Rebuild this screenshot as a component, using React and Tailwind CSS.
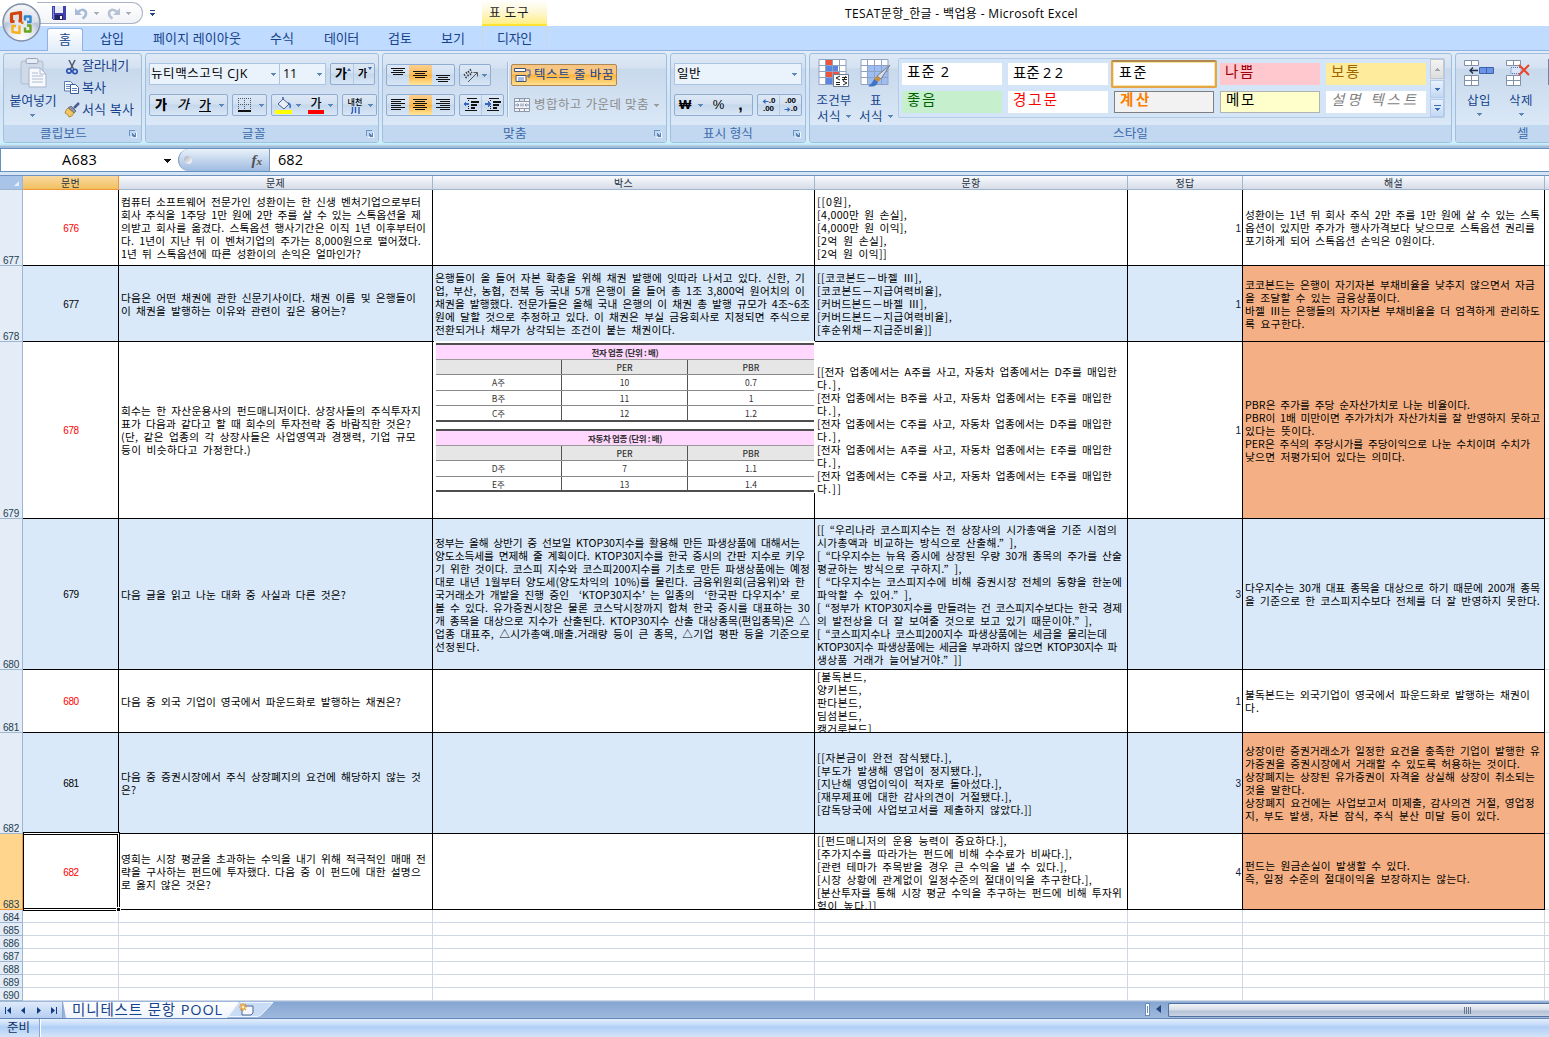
import React, { useLayoutEffect, useRef } from "react";

/* Text whose letter spacing is adjusted so that it fills a given width. */
function Fit({ w, children, className = "" }) {
  const ref = useRef(null);
  useLayoutEffect(() => {
    const el = ref.current;
    el.style.letterSpacing = "0px";
    const natural = el.getBoundingClientRect().width;
    const count = Array.from(el.textContent).length || 1;
    el.style.letterSpacing = (w - natural) / count + "px";
  }, [w, children]);
  return (
    <span ref={ref} className={"inline-block shrink-0 whitespace-pre " + className}>
      {children}
    </span>
  );
}

/* Full-width characters take two cells of 5px, the others one. */
function lineWidth(s) {
  let n = 0;
  for (const c of s) {
    const k = c.codePointAt(0);
    n += k > 0x2020 ? 10 : 5;
  }
  return n;
}

function Lines({ text }) {
  return (
    <div className="flex flex-col items-start">
      {text.split("\n").map((l, i) => (
        <div key={i} className="h-[13px] leading-[13px]">
          <Fit w={lineWidth(l)} className="[word-spacing:2.4px]">{l}</Fit>
        </div>
      ))}
    </div>
  );
}

const rows = [
  {
    n: 677, h: "h-[76px]", id: "676", red: true,
    b: "컴퓨터 소프트웨어 전문가인 성환이는 한 신생 벤처기업으로부터\n회사 주식을 1주당 1만 원에 2만 주를 살 수 있는 스톡옵션을 제\n의받고 회사를 옮겼다. 스톡옵션 행사기간은 이직 1년 이후부터이\n다. 1년이 지난 뒤 이 벤처기업의 주가는 8,000원으로 떨어졌다.\n1년 뒤 스톡옵션에 따른 성환이의 손익은 얼마인가?",
    c: "",
    d: "[[0원],\n[4,000만 원 손실],\n[4,000만 원 이익],\n[2억 원 손실],\n[2억 원 이익]]",
    e: "1",
    f: "성환이는 1년 뒤 회사 주식 2만 주를 1만 원에 살 수 있는 스톡\n옵션이 있지만 주가가 행사가격보다 낮으므로 스톡옵션 권리를\n포기하게 되어 스톡옵션 손익은 0원이다.",
  },
  {
    n: 678, h: "h-[76px]", id: "677", blue: true, orange: true,
    b: "다음은 어떤 채권에 관한 신문기사이다. 채권 이름 및 은행들이\n이 채권을 발행하는 이유와 관련이 깊은 용어는?",
    c: "은행들이 올 들어 자본 확충을 위해 채권 발행에 잇따라 나서고 있다. 신한, 기\n업, 부산, 농협, 전북 등 국내 5개 은행이 올 들어 총 1조 3,800억 원어치의 이\n채권을 발행했다. 전문가들은 올해 국내 은행의 이 채권 총 발행 규모가 4조~6조\n원에 달할 것으로 추정하고 있다. 이 채권은 부실 금융회사로 지정되면 주식으로\n전환되거나 채무가 상각되는 조건이 붙는 채권이다.",
    d: "[[코코본드－바젤 Ⅲ],\n[코코본드－지급여력비율],\n[커버드본드－바젤 Ⅲ],\n[커버드본드－지급여력비율],\n[후순위채－지급준비율]]",
    e: "1",
    f: "코코본드는 은행이 자기자본 부채비율을 낮추지 않으면서 자금\n을 조달할 수 있는 금융상품이다.\n바젤 Ⅲ는 은행들의 자기자본 부채비율을 더 엄격하게 관리하도\n록 요구한다.",
  },
  {
    n: 679, h: "h-[177px]", id: "678", red: true, orange: true, image: true,
    b: "희수는 한 자산운용사의 펀드매니저이다. 상장사들의 주식투자지\n표가 다음과 같다고 할 때 희수의 투자전략 중 바람직한 것은?\n(단, 같은 업종의 각 상장사들은 사업영역과 경쟁력, 기업 규모\n등이 비슷하다고 가정한다.)",
    c: "",
    d: "[[전자 업종에서는 A주를 사고, 자동차 업종에서는 D주를 매입한\n다.],\n[전자 업종에서는 B주를 사고, 자동차 업종에서는 E주를 매입한\n다.],\n[전자 업종에서는 C주를 사고, 자동차 업종에서는 D주를 매입한\n다.],\n[전자 업종에서는 A주를 사고, 자동차 업종에서는 E주를 매입한\n다.],\n[전자 업종에서는 C주를 사고, 자동차 업종에서는 E주를 매입한\n다.]]",
    e: "1",
    f: "PBR은 주가를 주당 순자산가치로 나눈 비율이다.\nPBR이 1배 미만이면 주가가치가 자산가치를 잘 반영하지 못하고\n있다는 뜻이다.\nPER은 주식의 주당시가를 주당이익으로 나눈 수치이며 수치가\n낮으면 저평가되어 있다는 의미다.",
  },
  {
    n: 680, h: "h-[151px]", id: "679", blue: true,
    b: "다음 글을 읽고 나눈 대화 중 사실과 다른 것은?",
    c: "정부는 올해 상반기 중 선보일 KTOP30지수를 활용해 만든 파생상품에 대해서는\n양도소득세를 면제해 줄 계획이다. KTOP30지수를 한국 증시의 간판 지수로 키우\n기 위한 것이다. 코스피 지수와 코스피200지수를 기초로 만든 파생상품에는 예정\n대로 내년 1월부터 양도세(양도차익의 10%)를 물린다. 금융위원회(금융위)와 한\n국거래소가 개발을 진행 중인  ‘KTOP30지수’ 는 일종의  ‘한국판 다우지수’ 로\n볼 수 있다. 유가증권시장은 물론 코스닥시장까지 합쳐 한국 증시를 대표하는 30\n개 종목을 대상으로 지수가 산출된다. KTOP30지수 산출 대상종목(편입종목)은 △\n업종 대표주, △시가총액.매출.거래량 등이 큰 종목, △기업 평판 등을 기준으로\n선정된다.",
    d: "[[ “우리나라 코스피지수는 전 상장사의 시가총액을 기준 시점의\n시가총액과 비교하는 방식으로 산출해.” ],\n[ “다우지수는 뉴욕 증시에 상장된 우량 30개 종목의 주가를 산술\n평균하는 방식으로 구하지.” ],\n[ “다우지수는 코스피지수에 비해 증권시장 전체의 동향을 한눈에\n파악할 수 있어.” ],\n[ “정부가 KTOP30지수를 만들려는 건 코스피지수보다는 한국 경제\n의 발전상을 더 잘 보여줄 것으로 보고 있기 때문이야.” ],\n[ “코스피지수나 코스피200지수 파생상품에는 세금을 물리는데\nKTOP30지수 파생상품에는 세금을 부과하지 않으면 KTOP30지수 파\n생상품 거래가 늘어날거야.” ]]",
    e: "3",
    f: "다우지수는 30개 대표 종목을 대상으로 하기 때문에 200개 종목\n을 기준으로 한 코스피지수보다 전체를 더 잘 반영하지 못한다.",
  },
  {
    n: 681, h: "h-[63px]", id: "680", red: true, top: true,
    b: "다음 중 외국 기업이 영국에서 파운드화로 발행하는 채권은?",
    c: "",
    d: "[불독본드,\n양키본드,\n판다본드,\n딤섬본드,\n캥거루본드]",
    e: "1",
    f: "불독본드는 외국기업이 영국에서 파운드화로 발행하는 채권이\n다.",
  },
  {
    n: 682, h: "h-[101px]", id: "681", blue: true, orange: true,
    b: "다음 중 증권시장에서 주식 상장폐지의 요건에 해당하지 않는 것\n은?",
    c: "",
    d: "[[자본금이 완전 잠식됐다.],\n[부도가 발생해 영업이 정지됐다.],\n[지난해 영업이익이 적자로 돌아섰다.],\n[재무제표에 대한 감사의견이 거절됐다.],\n[감독당국에 사업보고서를 제출하지 않았다.]]",
    e: "3",
    f: "상장이란 증권거래소가 일정한 요건을 충족한 기업이 발행한 유\n가증권을 증권시장에서 거래할 수 있도록 허용하는 것이다.\n상장폐지는 상장된 유가증권이 자격을 상실해 상장이 취소되는\n것을 말한다.\n상장폐지 요건에는 사업보고서 미제출, 감사의견 거절, 영업정\n지, 부도 발생, 자본 잠식, 주식 분산 미달 등이 있다.",
  },
  {
    n: 683, h: "h-[76px]", id: "682", red: true, orange: true, selected: true, top: true,
    b: "영희는 시장 평균을 초과하는 수익을 내기 위해 적극적인 매매 전\n략을 구사하는 펀드에 투자했다. 다음 중 이 펀드에 대한 설명으\n로 옳지 않은 것은?",
    c: "",
    d: "[[펀드매니저의 운용 능력이 중요하다.],\n[주가지수를 따라가는 펀드에 비해 수수료가 비싸다.],\n[관련 테마가 주목받을 경우 큰 수익을 낼 수 있다.],\n[시장 상황에 관계없이 일정수준의 절대이익을 추구한다.],\n[분산투자를 통해 시장 평균 수익을 추구하는 펀드에 비해 투자위\n험이 높다.]]",
    e: "4",
    f: "펀드는 원금손실이 발생할 수 있다.\n즉, 일정 수준의 절대이익을 보장하지는 않는다.",
  },
];

const COLS = "grid grid-cols-[23px_96px_314px_382px_313px_115px_302px_4px]";

function Down({ className = "", color = "#5b86b8" }) {
  return (
    <svg width="5" height="3" viewBox="0 0 5 3" className={"shrink-0 " + className} shapeRendering="crispEdges">
      <path d="M0 0h5v1H4v1H3v1H2V2H1V1H0z" fill={color} />
    </svg>
  );
}

/* ---------- title bar and tabs ---------- */

function OfficeButton() {
  return (
    <svg width="42" height="42" viewBox="0 0 42 42" className="absolute left-0 top-[2px] z-20">
      <defs>
        <radialGradient id="orb" cx="50%" cy="90%" r="90%">
          <stop offset="0" stopColor="#ffffff" />
          <stop offset=".4" stopColor="#dfe5ee" />
          <stop offset=".6" stopColor="#b9c4d6" />
          <stop offset="1" stopColor="#f6f8fb" />
        </radialGradient>
      </defs>
      <circle cx="21.500" cy="20.500" r="18.500" fill="url(#orb)" stroke="#7f8da6" strokeWidth="1.400" />
      <path d="M5 20a16.500 16 0 0 1 33 0q-16 4-33 0z" fill="#fff" opacity=".45" />
      <g fill="none" strokeLinejoin="round">
        <path d="M14.500 19.500h-3v-7.500l9-1.500v8.500h-2" stroke="#d2440e" strokeWidth="3.200" />
        <path d="M25 18.500v-4h5.500v5.500h-3.500" stroke="#2e86d0" strokeWidth="2.400" />
        <path d="M19.500 23.500v7.500l-7-1v-6h3.500" stroke="#f5b21c" strokeWidth="2.500" />
        <path d="M27 23.500h3.500v6h-5.500v-4" stroke="#6aa51f" strokeWidth="2.400" />
      </g>
      <path d="M21 19.500h2.500v2.500h-2.500z" fill="#e8741a" />
    </svg>
  );
}

function QuickAccess() {
  return (
    <div className="ml-[37px] mt-[2px] flex h-[22px] w-[106px] items-center rounded-r-full border border-l-0 border-[#a9b3c4] bg-gradient-to-b from-white to-[#f1f3f8]">
      <svg width="14" height="14" viewBox="0 0 14 14" className="ml-[15px]" shapeRendering="crispEdges">
        <path d="M0 0h14v14H1L0 13z" fill="#3f3fae" />
        <path d="M3 0h8v7H3z" fill="#e9ecf8" />
        <path d="M3 9h8v5H3z" fill="#23235f" />
        <path d="M8 10h2v3H8z" fill="#fff" />
        <path d="M1 1h1v12H1z" fill="#8585dd" />
      </svg>
      <svg width="13" height="13" viewBox="0 0 13 13" className="ml-[9px]">
        <path d="M3 5c4-4 8-2 8 1.500 0 2.500-2 4-3.500 5" fill="none" stroke="#a7bad6" strokeWidth="2.600" />
        <path d="M0 1v7h7z" fill="#a7bad6" />
      </svg>
      <Down className="ml-[6px]" color="#a9adb5" />
      <svg width="13" height="13" viewBox="0 0 13 13" className="ml-[8px]">
        <path d="M10 5c-4-4-8-2-8 1.500 0 2.500 2 4 3.500 5" fill="none" stroke="#b7c3d4" strokeWidth="2.600" />
        <path d="M13 1v7H6z" fill="#b7c3d4" />
      </svg>
      <Down className="ml-[6px]" color="#a9adb5" />
    </div>
  );
}

function TitleBar() {
  return (
    <div className="flex h-[26px] items-start bg-white">
      <QuickAccess />
      <svg width="6" height="6" viewBox="0 0 6 6" className="ml-[7px] mt-[10px]" shapeRendering="crispEdges">
        <path d="M0 0h5v1H0zM0 3h5v1H4v1H3v1H2V5H1V4H0z" fill="#26457f" />
      </svg>
      <div className="ml-[326px] flex h-[26px] w-[65px] justify-start border-b-2 border-[#ffe32e] bg-gradient-to-b from-white via-[#fdf7d3] to-[#ffef80] pl-[7px] text-[12.500px] leading-[25px] text-[#1e1e1e]">
        <Fit w={40}>표 도구</Fit>
      </div>
      <div className="ml-[298px] text-[12px] leading-[27px] text-black">
        <Fit w={233}>TESAT문항_한글 - 백업용 - Microsoft Excel</Fit>
      </div>
    </div>
  );
}

function Tabs() {
  const tabs = [
    ["삽입", 24, "w-[53px]"],
    ["페이지 레이아웃", 88, "w-[117px]"],
    ["수식", 24, "w-[54px]"],
    ["데이터", 35, "w-[64px]"],
    ["검토", 24, "w-[53px]"],
    ["보기", 24, "w-[41px]"],
  ];
  return (
    <div className="flex h-[25px] border-b border-[#8db2e3] bg-[#bfdbff] text-[13px] leading-[24px] text-[#15428b]">
      <div className="ml-[47px] mt-[2px] h-[23px] w-[36px] rounded-t-[3px] border border-b-0 border-[#8db2e3] bg-gradient-to-b from-white to-[#e1ecf9] pl-[11px] leading-[20px]">
        <Fit w={12}>홈</Fit>
      </div>
      <div className="w-[17px]" />
      {tabs.map(([t, w, c]) => (
        <div key={t} className={c}>
          <Fit w={w}>{t}</Fit>
        </div>
      ))}
      <div className="h-[20px] w-[65px] border-x border-[#cdd6d8] pl-[14px]">
        <Fit w={35}>디자인</Fit>
      </div>
    </div>
  );
}

/* ---------- ribbon ---------- */

function Launcher() {
  return (
    <svg width="8" height="8" viewBox="0 0 8 8" className="mr-[4px]" shapeRendering="crispEdges">
      <path d="M0 0h6v1H1v5H0z" fill="#6f94c2" />
      <path d="M3 3h1v1h1v1h1V3h1v5H3V7h1V6H3z" fill="#5d83b4" />
      <path d="M7 2h1v6H2V7h5z" fill="#fff" opacity=".8" />
    </svg>
  );
}

function Group({ w, label, lw, pad, launcher, children }) {
  return (
    <div className={"flex h-[90px] shrink-0 flex-col overflow-hidden rounded-[3px] border border-[#9ebfdd] bg-[linear-gradient(#dfe9f6_0,#d5e1f1_14px,#c8d9ec_15px,#dae8f7_71px)] " + w}>
      <div className="flex h-[71px] shrink-0">{children}</div>
      <div className="flex h-[17px] items-center justify-between bg-[#c1d8f0] text-[12.500px] leading-[16px] text-[#3e6aaa]">
        <div className={pad}>
          <Fit w={lw}>{label}</Fit>
        </div>
        {launcher && <Launcher />}
      </div>
    </div>
  );
}

function Box({ className, children }) {
  return (
    <div className={"flex h-[22px] shrink-0 items-center overflow-hidden rounded-[2px] border border-[#8fadd3] bg-[linear-gradient(#dde8f5_0,#d2e0f1_9px,#c5d7ec_10px,#d8e6f6_20px)] " + className}>
      {children}
    </div>
  );
}

function Align({ kind, active }) {
  const y0 = kind === "top" ? 3 : kind === "mid" ? 6 : kind === "bot" ? 10 : 4;
  const long = kind.length > 1;
  const widths = long ? [14, 10, 14, 10] : [14, 10, 14, 10, 14, 10];
  return (
    <div className={"flex h-[20px] w-[23px] items-center justify-center " + (active ? "bg-[linear-gradient(#fbcf8f,#fcbf5a_9px,#fdb040_10px,#ffe69a)]" : "")}>
      <svg width="14" height="20" viewBox="0 0 14 20" shapeRendering="crispEdges">
        {widths.map((w, i) => {
          const x = kind === "l" ? 0 : kind === "r" ? 14 - w : (14 - w) / 2;
          return <rect key={i} x={x} y={y0 + i * 2} width={w} height="1" fill="#111" />;
        })}
      </svg>
    </div>
  );
}

function Indent({ out }) {
  return (
    <svg width="16" height="14" viewBox="0 0 16 14" shapeRendering="crispEdges" className="mx-[2.500px]">
      <path d="M4 0h10v1H4zM8 3h8v2H8zM8 6h6v2H8zM8 9h4v2H8zM2 12h12v1H2zM5 2h1v1H5zM5 8h1v1H5zM5 10h1v1H5z" fill="#111" />
      {out ? <path d="M0 6l3-3v2h3v2H3v2z" fill="#3566c4" /> : <path d="M6 6L3 3v2H0v2h3v2z" fill="#3566c4" />}
    </svg>
  );
}

function ClipboardGroup() {
  return (
    <Group w="w-[139px]" label="클립보드" lw={47} pad="pl-[36px]" launcher>
      <div className="flex w-[56px] flex-col items-center text-[13px] leading-[18px] text-[#15428b]">
        <svg width="28" height="32" viewBox="0 0 28 32" className="ml-[4px] mt-[3px]">
          <rect x="1" y="4" width="22" height="23" rx="2" fill="#cfd9e8" stroke="#aebdd3" />
          <rect x="6" y="1.500" width="12" height="5" rx="1.500" fill="#e8edf4" stroke="#94a3bb" />
          <path d="M9 11h11l6 6v13H9z" fill="#f7f9fc" stroke="#a5b4cc" />
          <path d="M20 11v6h6M12 16h6M12 19h11M12 22h11M12 25h11" fill="none" stroke="#aebcd3" />
        </svg>
        <Fit w={47} className="mt-[2px] ml-[2px]">붙여넣기</Fit>
        <Down className="mt-[5px]" />
      </div>
      <div className="flex flex-col pl-[4px] text-[13px] leading-[22px] text-[#15428b]">
        <div className="flex h-[22px] items-center">
          <svg width="16" height="16" viewBox="0 0 16 16" className="mr-[2px] mt-[3px]">
            <path d="M5 1l4.500 9M11 1L6.500 10" stroke="#4e5a70" strokeWidth="1.500" fill="none" />
            <circle cx="5" cy="12" r="2.200" fill="none" stroke="#2d55b0" strokeWidth="1.700" />
            <circle cx="11" cy="12.500" r="2.200" fill="none" stroke="#2d55b0" strokeWidth="1.700" />
          </svg>
          <Fit w={47}>잘라내기</Fit>
        </div>
        <div className="flex h-[22px] items-center">
          <svg width="16" height="16" viewBox="0 0 16 16" className="mr-[2px] mt-[2px]">
            <path d="M.5 1.500h6l2.500 2.500v7H.5z" fill="#fff" stroke="#5878b0" />
            <path d="M2 4.500h4M2 6.500h4M2 8.500h4" stroke="#6d8dc5" />
            <path d="M6.500 4.500h5l3 3v6h-8z" fill="#fff" stroke="#3a5c9e" />
            <path d="M8 8.500h5M8 10.500h5" stroke="#5c7fc0" />
          </svg>
          <Fit w={24}>복사</Fit>
        </div>
        <div className="flex h-[22px] items-center">
          <svg width="16" height="16" viewBox="0 0 16 16" className="mr-[2px] mt-[2px]">
            <path d="M15 1l-5 5" stroke="#4a5d8e" strokeWidth="2.500" />
            <path d="M7 4l5 5-2 2-6-5z" fill="#8a93a8" stroke="#4a5470" strokeWidth=".7" />
            <path d="M4 6l6 5q-2 4-5 4-1-3-4-4 1-4 3-5z" fill="#efc565" stroke="#a67a25" strokeWidth=".8" />
          </svg>
          <Fit w={52}>서식 복사</Fit>
        </div>
      </div>
    </Group>
  );
}

function Ga({ className, size = "w-[22px]" }) {
  return <div className={"mb-px text-center leading-[19px] text-black " + size + " " + className}>가</div>;
}

function FontGroup() {
  return (
    <Group w="w-[234px]" label="글꼴" lw={24} pad="pl-[96px]" launcher>
      <div className="flex flex-col pl-[3px] pt-[9px]">
        <div className="flex h-[22px]">
          <div className="flex h-[22px] w-[131px] items-center justify-between border border-[#abc4e3] bg-[#eaf2fb] pl-px pr-[2px] text-[12.500px] leading-[20px] text-black">
            <Fit w={97}>뉴티맥스고딕 CJK</Fit>
            <Down className="mr-px" />
          </div>
          <div className="flex h-[22px] w-[46px] items-center justify-between border border-l-0 border-[#abc4e3] bg-[#eaf2fb] pl-[3px] pr-[3px] text-[12.500px] leading-[20px] text-black">
            <Fit w={14}>11</Fit>
            <Down />
          </div>
          <Box className="ml-[4px] w-[45px] text-[13px] font-bold">
            <Ga className="text-[13px]" size="w-[20px]" />
            <div className="mb-[10px] -ml-[4px] h-0 w-0 border-x-[2px] border-b-[3px] border-x-transparent border-b-[#3c5f9e]" />
            <div className="ml-[2px] h-[20px] w-px bg-[#b4cbe6]" />
            <Ga className="text-[10px]" size="w-[17px]" />
            <div className="mb-[12px] -ml-[3px] h-0 w-0 border-x-[2px] border-t-[3px] border-x-transparent border-t-[#3c5f9e]" />
          </Box>
        </div>
        <div className="mt-[9px] flex h-[22px] gap-[4px]">
          <Box className="w-[79px] text-[13px]">
            <Ga className="font-black" />
            <Ga className="font-medium italic" />
            <Ga className="font-medium underline underline-offset-2" />
            <Down className="ml-[3px]" />
          </Box>
          <Box className="w-[35px]">
            <svg width="14" height="14" viewBox="0 0 14 14" className="ml-[5px]" shapeRendering="crispEdges">
              <path d="M.5 0v12M6.500 0v12M12.500 0v12M0 .5h13M0 6.500h13" stroke="#4b5666" strokeDasharray="1 1" fill="none" />
              <path d="M0 12h13v2H0z" fill="#111" />
            </svg>
            <Down className="ml-[7px]" />
          </Box>
          <Box className="w-[67px]">
            <svg width="17" height="17" viewBox="0 0 17 17" className="ml-[3px]">
              <path d="M3 7l5-5 6 5-5 5z" fill="#e8eef8" stroke="#4a6291" />
              <path d="M8 2V0M13 6q3 1 2 5" fill="none" stroke="#3465bd" strokeWidth="1.500" />
              <path d="M0 13h17v4H0z" fill="#ffff00" />
            </svg>
            <Down className="ml-[4px]" />
            <div className="ml-[7px] flex w-[16px] flex-col items-center text-[12px] font-medium leading-[13px] text-black">
              가<div className="h-[4px] w-[16px] bg-[#ff0000]" />
            </div>
            <Down className="ml-[4px]" />
          </Box>
          <Box className="w-[35px]">
            <div className="ml-[4px] flex w-[16px] flex-col items-center font-medium">
              <Fit w={15} className="text-[8px] leading-[10px] text-black">내천</Fit>
              <svg width="9" height="7" viewBox="0 0 9 7" className="ml-px"><path d="M1.500 0v4q0 2-1.500 3M4.500 0v6M8 0v7" fill="none" stroke="#2f5bb8" strokeWidth="1.400" /></svg>
            </div>
            <Down className="ml-[5px]" />
          </Box>
        </div>
      </div>
    </Group>
  );
}

function AlignGroup() {
  return (
    <Group w="w-[285px]" label="맞춤" lw={24} pad="pl-[120px]" launcher>
      <div className="flex pl-[3px] pt-[10px]">
        <div className="flex flex-col gap-[8px]">
          <div className="flex gap-[4px]">
            <Box className="w-[69px]">
              <Align kind="top" />
              <Align kind="mid" active />
              <Align kind="bot" />
            </Box>
            <Box className="w-[32px]">
              <svg width="16" height="16" viewBox="0 0 16 16" className="ml-[3px]">
                <path d="M1 7l3 5M3 5l3 5M5 4l3 4M7 2l2 4" stroke="#333" strokeWidth="1.300" strokeDasharray="2 1" />
                <path d="M5 15l9-9M14.500 5.500v4M14.500 5.500h-4" stroke="#555" fill="none" />
              </svg>
              <Down className="ml-[3px]" />
            </Box>
          </div>
          <div className="flex gap-[4px]">
            <Box className="w-[69px]">
              <Align kind="l" />
              <Align kind="c" active />
              <Align kind="r" />
            </Box>
            <Box className="w-[45px]">
              <Indent out />
              <div className="h-[20px] w-px bg-[#b4cbe6]" />
              <Indent />
            </Box>
          </div>
        </div>
        <div className="ml-[3px] mt-[-2px] h-[55px] w-[2px] border-r border-[#eaf2fb] bg-[#9db9da]" />
        <div className="ml-[2px] flex flex-col gap-[8px] text-[12.500px] leading-[20px]">
          <div className="flex h-[22px] w-[106px] items-center rounded-[2px] border border-[#b0884f] bg-[linear-gradient(#f5c587,#fbc777_9px,#fdb33f_10px,#ffe08c)] pl-[2px] text-[#15428b]">
            <svg width="18" height="16" viewBox="0 0 18 16" className="mr-[2px]">
              <path d="M.5 1.500h11v3H.5z" fill="#fff" stroke="#45536e" />
              <path d="M2 8.500h10v6H2z" fill="#fff" stroke="#45536e" />
              <path d="M4 11h6M4 13h6" stroke="#4c76c4" />
              <path d="M12 3h4v6h-2M15.500 7l-2 2 2 2" fill="none" stroke="#3d63ae" />
            </svg>
            <Fit w={80}>텍스트 줄 바꿈</Fit>
          </div>
          <div className="flex h-[22px] items-center pl-[3px] text-[#8d8d8d]">
            <svg width="16" height="14" viewBox="0 0 16 14" className="mr-[4px]">
              <path d="M.5.500h15v13H.5zM5.500.500v3h5v-3M5.500 13.500v-3h5v3M.5 3.500h15M.5 10.500h15" fill="#f2f4f8" stroke="#8d98ae" />
              <path d="M1 7h4M15 7h-4M3.500 5.500L5 7 3.500 8.500M12.500 5.500L11 7l1.500 1.500M7 5.500v3M9 5.500v3" fill="none" stroke="#7e8aa5" />
            </svg>
            <Fit w={115}>병합하고 가운데 맞춤</Fit>
            <Down className="ml-[5px]" color="#9a9a9a" />
          </div>
        </div>
      </div>
    </Group>
  );
}

function Decimals({ a, b, left }) {
  return (
    <div className="flex w-[21px] flex-col items-center font-['Liberation_Sans'] text-[8px] font-bold leading-[8px] text-black">
      <div className="flex items-center whitespace-pre">
        {left && <svg width="7" height="5" viewBox="0 0 6 5"><path d="M0 2.500L3 0v2h3v1H3v2z" fill="#3566c4" /></svg>}
        {a}
      </div>
      <div className="flex items-center whitespace-pre">
        {!left && <svg width="7" height="5" viewBox="0 0 6 5"><path d="M6 2.500L3 0v2H0v1h3v2z" fill="#3566c4" /></svg>}
        {b}
      </div>
    </div>
  );
}

function NumberGroup() {
  return (
    <Group w="w-[136px]" label="표시 형식" lw={50} pad="pl-[32px]" launcher>
      <div className="flex flex-col pl-[3px] pt-[9px]">
        <div className="flex h-[22px] w-[128px] items-center justify-between border border-[#abc4e3] bg-[#eaf2fb] pl-[2px] pr-[4px] text-[12.500px] leading-[20px] text-black">
          <Fit w={24}>일반</Fit>
          <Down />
        </div>
        <div className="mt-[9px] flex gap-[4px]">
          <Box className="w-[79px] font-['Liberation_Sans'] text-[13px] font-bold leading-[18px] text-black">
            <div className="w-[21px] text-center">₩</div>
            <Down className="ml-[3px]" />
            <div className="ml-[5px] w-[22px] text-center text-[13px] font-medium">%</div>
            <div className="w-[24px] text-center text-[16px] leading-[12px]">,</div>
          </Box>
          <Box className="w-[45px]">
            <Decimals a=".0" b=".00" left />
            <div className="h-[20px] w-px bg-[#b4cbe6]" />
            <Decimals a=".00" b=".0" />
          </Box>
        </div>
      </div>
    </Group>
  );
}

function GridIcon({ cond }) {
  return (
    <svg width="32" height="30" viewBox="0 0 32 30">
      <rect x="1" y="1" width="27" height="25" fill="#fff" />
      {cond ? (
        <g>
          <path d="M8 1h7v5H8zM8 13h13v6H8z" fill="#f0523c" />
          <path d="M8 7h12v6H8zM8 19h6v6H8z" fill="#5a86e0" />
        </g>
      ) : (
        <path d="M8 7h20v19H8z" fill="#9ebdf3" />
      )}
      <path d="M1 .5h27v25H1zM1 6.500h27M1 12.500h27M1 18.500h27M7.500 0v25M14.500 0v25M21.500 0v25" fill="none" stroke="#8fa2c4" />
      {cond ? (
        <g>
          <path d="M15.500 15.500h15v12h-15z" fill="#fff" stroke="#6b7890" />
          <path d="M22 17l-4 2 4 2M18 23.500h4M18 25.500h4M24 18.500h5M24 20.500h5M28 17l-3 5M25 22l4 2-4 2" fill="none" stroke="#222" />
        </g>
      ) : (
        <g>
          <path d="M30 6l-9 14-4-3z" fill="#d8dce4" stroke="#707a8c" />
          <path d="M21 20l-4-3-3 3 4 3z" fill="#c98d3b" />
          <path d="M18 23l-4-3q-2 5-6 7 8 2 10-4z" fill="#3f73c8" />
        </g>
      )}
    </svg>
  );
}

function Big({ icon, a, aw, b, bw, className = "", gap = "mt-[4px]" }) {
  return (
    <div className={"flex flex-col items-center pt-[5px] text-[12.500px] leading-[15px] text-[#15428b] " + className}>
      {icon}
      <Fit w={aw} className={gap}>{a}</Fit>
      <div className="mt-px flex items-center gap-[5px]">
        {b && <Fit w={bw}>{b}</Fit>}
        <Down className={b ? "" : "mt-[4px]"} />
      </div>
    </div>
  );
}

function StylesGroup() {
  const cell = "flex h-[22px] w-[100px] items-start overflow-hidden pl-[5px] text-[14.500px] ";
  const one = "leading-[18px] ";
  const two = "leading-[17px] ";
  const twoBordered = "leading-[15px] ";
  return (
    <Group w="w-[643px]" label="스타일" lw={35} pad="pl-[303px]">
      <Big className="ml-[3px] w-[42px]" icon={<GridIcon cond />} a="조건부" aw={35} b="서식" bw={24} />
      <Big className="w-[42px]" icon={<GridIcon />} a="표" aw={12} b="서식" bw={24} />
      <div className="ml-px mt-[4px] flex h-[60px] w-[547px] rounded-[2px] border border-[#b3cbe8] bg-[#d4e5f8]">
        <div className="grid grid-cols-[100px_100px_100px_100px_100px] grid-rows-[22px_22px] content-start gap-x-[6px] gap-y-[6px] pl-[3px] pt-[4px]">
          <div className={cell + one + "bg-white text-black"}><Fit w={43}>표준 2</Fit></div>
          <div className={cell + "bg-white text-[13px] leading-[20px] text-black"}><Fit w={50}>표준 2 2</Fit></div>
          <div className="-ml-[3px] -mt-[3px] flex h-[28px] w-[106px] items-start rounded-[2px] border-2 border-[#e3a548] border-t-[#b0884f] bg-white pl-[6px] text-[14px] leading-[20px] text-black shadow-[inset_0_0_0_1px_#fde4a4]"><Fit w={29}>표준</Fit></div>
          <div className={cell + one + "bg-[#ffc7ce] text-[#9c0006]"}><Fit w={30}>나쁨</Fit></div>
          <div className={cell + one + "bg-[#ffeb9c] text-[#9c6500]"}><Fit w={30}>보통</Fit></div>
          <div className={cell + two + "bg-[#c6efce] text-[#006100]"}><Fit w={30}>좋음</Fit></div>
          <div className={cell + two + "bg-white text-[#ff0000]"}><Fit w={46}>경고문</Fit></div>
          <div className={cell + twoBordered + "border border-[#7f7f7f] bg-[#f2f2f2] font-bold text-[#fa7d00]"}><Fit w={32}>계산</Fit></div>
          <div className={cell + twoBordered + "border border-[#b2b2b2] bg-[#ffffcc] text-black"}><Fit w={30}>메모</Fit></div>
          <div className={cell + two + "bg-white italic text-[#7f7f7f]"}><Fit w={88}>설명 텍스트</Fit></div>
        </div>
        <div className="ml-auto flex w-[14px] flex-col gap-px">
          <div className="flex h-[20px] items-center justify-center border border-[#c3c7cd] bg-gradient-to-b from-[#f4f4f4] to-[#dcdddf]"><Down className="rotate-180" color="#a0a3a8" /></div>
          <div className="flex h-[18px] items-center justify-center border border-[#b3cbe8] bg-gradient-to-b from-[#e9f2fd] to-[#c3d8f3]"><Down color="#3f6eb0" /></div>
          <div className="flex h-[18px] flex-col items-center justify-center gap-[2px] border border-[#b3cbe8] bg-gradient-to-b from-[#e9f2fd] to-[#c3d8f3]">
            <div className="h-px w-[7px] bg-[#3f6eb0]" />
            <Down color="#3f6eb0" />
          </div>
        </div>
      </div>
    </Group>
  );
}

function CellsIcon({ del }) {
  return (
    <svg width="32" height="28" viewBox="0 0 32 28">
      <path d="M1.500 1.500h14v5h-14zM8.500 1.500v5M1.500 16.500h14v10h-14zM1.500 21.500h14M8.500 16.500v10" fill="#fff" stroke="#8391a8" />
      {del ? (
        <g>
          <path d="M6 8.500h10v6H6z" fill="#dbe7f8" stroke="#5277b5" strokeDasharray="1 1" />
          <path d="M14 6l10 10M24 6L14 16" stroke="#e8452c" strokeWidth="2" />
        </g>
      ) : (
        <g>
          <path d="M16.500 8.500h14v6h-14zM23.500 8.500v6" fill="#6a94e6" stroke="#3c62ac" />
          <path d="M7 11.500h8M10 8.500l-3 3 3 3" fill="none" stroke="#222f4d" strokeWidth="1.300" />
        </g>
      )}
    </svg>
  );
}

function Ribbon() {
  return (
    <div className="flex h-[97px] gap-[3px] overflow-hidden border-b-2 border-b-[#a3bbdb] bg-[linear-gradient(#e2ecf8_0,#d3e2f4_50px,#d8eaf8_88px,#c4f1fb_93px,#b5c9e4_95px)] pl-[3px] pt-[2px]">
      <ClipboardGroup />
      <FontGroup />
      <AlignGroup />
      <NumberGroup />
      <StylesGroup />
      <Group w="w-[170px]" label="셀" lw={12} pad="pl-[61px]">
        <Big className="ml-[4px] w-[38px]" icon={<CellsIcon />} a="삽입" aw={24} gap="mt-[6px]" />
        <Big className="ml-[6px] w-[34px]" icon={<CellsIcon del />} a="삭제" aw={24} gap="mt-[6px]" />
        <div className="ml-[10px] mt-[5px] h-[26px] w-[20px] border-l-2 border-t-2 border-[#6d84a8] bg-[#aebfd8]" />
      </Group>
    </div>
  );
}

/* ---------- formula bar ---------- */

function FormulaBar() {
  return (
    <div className="flex h-[24px] border-y border-[#6491bd] bg-white text-[14.500px] leading-[22px] text-black">
      <div className="flex w-[178px] items-center border-l border-[#6491bd]">
        <Fit w={35} className="ml-[61px]">A683</Fit>
        <svg width="7" height="4" viewBox="0 0 7 4" className="ml-[67px] mt-px" shapeRendering="crispEdges"><path d="M0 0h7v1H6v1H5v1H4v1H3V3H2V2H1V1H0z" fill="#111" /></svg>
      </div>
      <div className="flex w-[92px] items-center justify-between rounded-l-full border-l border-r border-[#7d9ac2] bg-gradient-to-b from-[#eaf1fa] to-[#9ebbe0] pl-[5px] pr-[7px]">
        <div className="h-[8px] w-[8px] rounded-full bg-gradient-to-br from-[#a9b0bc] to-white" />
        <span className="font-['Liberation_Serif'] text-[15px] font-bold italic text-[#505050]">f<span className="text-[11px]">x</span></span>
      </div>
      <Fit w={25} className="ml-[8px]">682</Fit>
    </div>
  );
}

/* ---------- sheet ---------- */

function PictureTable({ title, data }) {
  const line = "grid h-[15.600px] grid-cols-[126px_126px_126px] border-b border-[#8a8a8a] text-center last:border-b-2 last:border-[#4f4f4f]";
  return (
    <div className="border-t-2 border-[#4f4f4f] text-[8.500px] leading-[14px] text-[#333]">
      <div className="h-[14.600px] border-b border-[#999] bg-[#ffd7ff] text-center font-bold">
        <Fit w={title.length > 14 ? 74 : 67}>{title}</Fit>
      </div>
      {data.map((r, i) => (
        <div key={i} className={line + (i === 0 ? " bg-[#e6e6e6] font-medium" : "")}>
          <div className="border-r border-[#555]">{r[0]}</div>
          <div className="border-r border-[#555]">{r[1]}</div>
          <div>{r[2]}</div>
        </div>
      ))}
    </div>
  );
}

function Picture() {
  return (
    <div className="absolute -top-px left-px z-10 flex h-[152px] w-[381px] flex-col gap-[7px] bg-white pl-[2px] pr-px pt-[2px]">
      <PictureTable title="전자 업종 (단위 : 배)" data={[["", "PER", "PBR"], ["A주", "10", "0.7"], ["B주", "11", "1"], ["C주", "12", "1.2"]]} />
      <PictureTable title="자동차 업종 (단위 : 배)" data={[["", "PER", "PBR"], ["D주", "7", "1.1"], ["E주", "13", "1.4"]]} />
    </div>
  );
}

/* Frame of the active cell: black, white, black, with the fill handle. */
function Selection() {
  return (
    <>
      <div className="absolute -bottom-[2px] -right-[2px] -top-[2px] left-0 z-10 border border-black">
        <div className="h-full border border-l-0 border-white">
          <div className="h-full border border-l-0 border-black" />
        </div>
      </div>
      <div className="absolute -bottom-[3px] -right-[3px] z-20 h-[5px] w-[5px] border border-white bg-black" />
    </>
  );
}

const DIGITS = "font-['Liberation_Sans'] text-[10px] ";

function Row({ r }) {
  const bg = r.blue ? "bg-[#d9e9f9]" : "bg-white";
  const cell = "relative flex border-b border-r border-black min-h-0 pl-[2px] ";
  const clip = "flex h-full overflow-hidden ";
  return (
    <div className={COLS + " " + r.h}>
      <div className={"flex items-end justify-end border-b border-r pr-[3px] text-[#22404f] " + (r.selected ? "border-[#f29536] bg-[#ffd58d]" : "border-[#9eb6ce] bg-[#e4ecf7]")}>
        <Fit w={16} className={DIGITS + "-mb-px leading-[10px]"}>{String(r.n)}</Fit>
      </div>
      <div className={cell + "items-center justify-center pl-0 pr-px pt-px " + bg + (r.red ? " text-[#ff0000]" : "")}>
        <Fit w={15.5} className={DIGITS + "leading-[11px]"}>{r.id}</Fit>
        {r.selected && <Selection />}
      </div>
      <div className={cell + "items-center " + bg}><Lines text={r.b} /></div>
      <div className={cell + "items-center " + bg}>
        {r.image ? <Picture /> : <Lines text={r.c} />}
      </div>
      <div className={cell + bg}>
        <div className={clip + (r.top ? "items-start" : "items-center")}><Lines text={r.d} /></div>
      </div>
      <div className={cell + "items-center justify-end pr-px pt-px " + bg}>
        <span className={DIGITS + "leading-[11px] text-[#10243c]"}>{r.e}</span>
      </div>
      <div className={cell + "items-center " + (r.orange ? "bg-[#f4b084]" : bg)}><Lines text={r.f} /></div>
      <div className="border-b border-[#d0d7e5] bg-white" />
    </div>
  );
}

function Sheet() {
  const heads = [["문제", 19], ["박스", 19], ["문항", 19], ["정답", 19], ["해설", 19]];
  return (
    <div className="h-[829px] overflow-hidden border-t-[3px] border-[#d6e5f5] bg-white font-['Noto_Sans_CJK_KR',sans-serif] text-[10.700px] text-black">
      <div className={COLS + " h-[15px] border-t border-[#6f93be] text-[10px] leading-[13px] text-[#1e3040]"}>
        <div className="flex items-end justify-end border-b border-r border-[#9eb6ce] bg-[#a9c4e9] p-[3px]">
          <div className="h-0 w-0 border-b-[5px] border-l-[5px] border-b-[#e6eefa] border-l-transparent" />
        </div>
        <div className="border-b border-r border-[#f29536] bg-gradient-to-b from-[#f9d99f] to-[#f1c15f] text-center"><Fit w={19}>문번</Fit></div>
        {heads.map(([t, w]) => (
          <div key={t} className="border-b border-r border-[#9eb6ce] bg-gradient-to-b from-[#f8fafc] to-[#d6dce8] text-center"><Fit w={w}>{t}</Fit></div>
        ))}
        <div className="border-b border-[#9eb6ce] bg-gradient-to-b from-[#f8fafc] to-[#d6dce8]" />
      </div>
      {rows.map((r) => (
        <Row key={r.n} r={r} />
      ))}
      {[684, 685, 686, 687, 688, 689, 690].map((n) => (
        <div key={n} className={COLS + " h-[13px]"}>
          <div className="flex items-end justify-end border-b border-r border-[#9eb6ce] bg-[#e4ecf7] pr-[3px] text-[#22404f]">
            <Fit w={16} className={DIGITS + "-mb-px leading-[11px]"}>{String(n)}</Fit>
          </div>
          {[1, 2, 3, 4, 5, 6].map((k) => (
            <div key={k} className="border-b border-r border-[#d0d7e5]" />
          ))}
          <div className="border-b border-[#d0d7e5]" />
        </div>
      ))}
      <div className={COLS + " h-px"}>
        <div className="border-r border-[#9eb6ce] bg-[#e4ecf7]" />
        {[1, 2, 3, 4, 5, 6].map((k) => (
          <div key={k} className="border-r border-[#d0d7e5]" />
        ))}
      </div>
    </div>
  );
}

/* ---------- sheet tabs and status ---------- */

function SheetTabs() {
  return (
    <div className="flex h-[18px] border-b border-t border-[#6487b8] border-t-[#9db8dc] bg-gradient-to-b from-[#86a6d2] to-[#9fb9dd]">
      <div className="flex w-[63px] items-center justify-around border-r border-[#88a5cf] bg-gradient-to-b from-[#dfeafa] to-[#b4cdf0] pl-px">
        {["M0 0h1v7H0zM6 0v7L2 3.500z", "M5 0v7L1 3.500z", "M1 0v7l4-3.500z", "M0 0v7l4-3.500zM5 0h1v7H5z"].map((d) => (
          <svg key={d} width="7" height="7" viewBox="0 0 7 7"><path d={d} fill="#143c85" /></svg>
        ))}
      </div>
      <div className="w-[176px] bg-gradient-to-b from-white to-[#eef4fc] pl-[9px] text-[14.500px] leading-[15px] text-[#15428b] [clip-path:polygon(0_0,100%_0,calc(100%-12px)_100%,3px_100%)]">
        <Fit w={151}>미니테스트 문항 POOL</Fit>
      </div>
      <svg width="46" height="15" viewBox="0 0 46 15" className="-ml-[11px]">
        <path d="M0 14.500L9 3q2-2.500 4-2.500h32L34 12q-2 2.500-5 2.500z" fill="#c9dcf5" stroke="#eef5fd" />
        <path d="M14 4h11v7l-2 2h-9z" fill="#f5f8fd" stroke="#4d6597" />
        <path d="M15 1v8M11 5h8M12 2l6 6M18 2l-6 6" stroke="#e8962b" strokeWidth="1.200" />
        <circle cx="15" cy="5" r="1.500" fill="#fff3b8" />
      </svg>
      <div className="ml-auto flex h-[14px] w-[404px] items-center">
        <div className="mt-px flex h-[13px] w-[5px] justify-center border border-[#6a8cbb] bg-white"><div className="my-[2px] w-px bg-[#6a8cbb]" /></div>
        <svg width="5" height="8" viewBox="0 0 5 8" className="ml-[6px]"><path d="M5 0v8L0 4z" fill="#27467e" /></svg>
        <div className="ml-[7px] mt-[2px] flex h-[14px] flex-1 items-center rounded-l-[2px] border border-r-0 border-[#54709e] bg-[linear-gradient(#f1f4f8,#d6dde8_6px,#b5c2d6_7px,#c9d4e4)]">
          <div className="ml-[295px] flex gap-px">
            {[0, 1, 2, 3].map((k) => <div key={k} className="h-[7px] w-px bg-[#67768f]" />)}
          </div>
        </div>
      </div>
    </div>
  );
}

export default function App() {
  return (
    <div className="relative flex h-[1037px] w-[1549px] flex-col overflow-hidden bg-white font-['Open_Sans','Noto_Sans_CJK_KR',sans-serif]">
      <OfficeButton />
      <TitleBar />
      <Tabs />
      <Ribbon />
      <FormulaBar />
      <Sheet />
      <SheetTabs />
      <div className="flex h-[18px] bg-[linear-gradient(#e3eefb_0,#c9defa_5px,#b0cff6_8px,#d3e4f9_18px)] text-[12.500px] leading-[18px] text-[#15305f]">
        <div className="w-[40px] border-r border-[#86a8d4] pl-[7px]">
          <Fit w={23}>준비</Fit>
        </div>
        <div className="w-px bg-white" />
      </div>
    </div>
  );
}
